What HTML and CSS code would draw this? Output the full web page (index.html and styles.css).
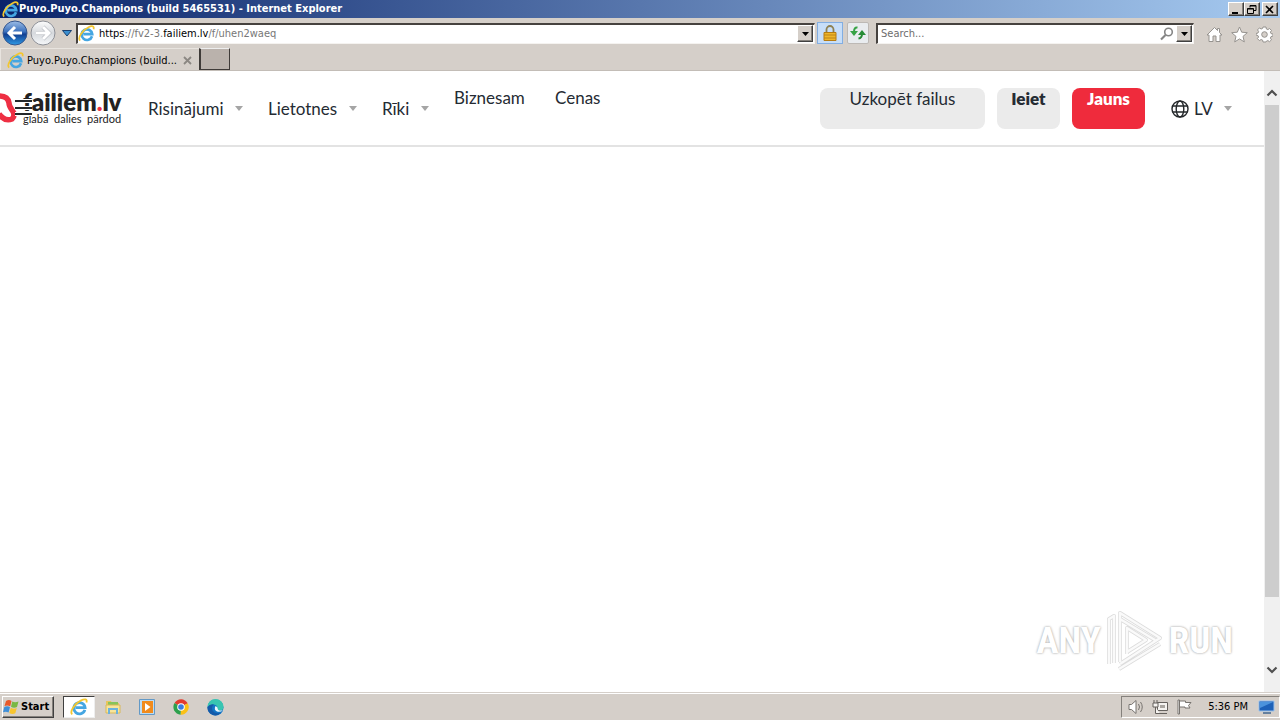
FILE: index.html
```html
<!DOCTYPE html>
<html lang="lv">
<head>
<meta charset="utf-8">
<title>Puyo.Puyo.Champions (build 5465531)</title>
<link rel="stylesheet" href="styles.css">
</head>
<body>
<svg class="defs" aria-hidden="true">
  <defs>
    <linearGradient id="blue" x1="0" y1="0" x2="0" y2="1"><stop offset="0" stop-color="#9dbde6"/><stop offset=".45" stop-color="#3a70bd"/><stop offset=".55" stop-color="#123f91"/><stop offset="1" stop-color="#2e9be6"/></linearGradient>
    <linearGradient id="pale" x1="0" y1="0" x2="0" y2="1"><stop offset="0" stop-color="#fdfdfd"/><stop offset=".5" stop-color="#d6d9dd"/><stop offset="1" stop-color="#f6f8fa"/></linearGradient>
    <symbol id="ie" viewBox="0 0 16 16">
      <path d="M13.2 10.6A5 5 0 1 1 13.4 8.600H5" fill="none" stroke="#45a6e2" stroke-width="2.500"/>
      <path d="M2 14.600C-.8 12 4.500 4.800 9.500 2.300 13.200.4 15.600.8 14.600 4" fill="none" stroke="#f3c62f" stroke-width="1.600"/>
    </symbol>
  </defs>
</svg>
<div class="titlebar">
  <svg class="i16"><use href="#ie"/></svg>
  <span class="title">Puyo.Puyo.Champions (build 5465531) - Internet Explorer</span>
  <button class="win" aria-label="Minimize"><svg width="10" height="9"><path d="M1 7h6v2H1z"/></svg></button>
  <button class="win" aria-label="Restore"><svg width="10" height="9" fill="none" stroke="#000"><path d="M3 2.500V.5h6v5H7M3 1h6M.5 3.500h6v5h-6zM.5 4h6"/></svg></button>
  <button class="win close" aria-label="Close"><svg width="10" height="9" stroke="#000" stroke-width="1.600"><path d="M1 1l7 7M8 1L1 8"/></svg></button>
</div>
<div class="toolbar">
  <button class="round" aria-label="Back"><svg width="26" height="26" viewBox="0 0 26 26"><circle cx="13" cy="13" r="12" fill="url(#blue)" stroke="#35568e"/><path d="M20 13H8M13 7l-6 6 6 6" fill="none" stroke="#fff" stroke-width="3"/></svg></button>
  <button class="round" aria-label="Forward"><svg width="26" height="26" viewBox="0 0 26 26"><circle cx="13" cy="13" r="12" fill="url(#pale)" stroke="#8d9097"/><path d="M6 13h12M13 7l6 6-6 6" fill="none" stroke="#aeb2b8" stroke-width="4"/><path d="M6 13h12M13 7l6 6-6 6" fill="none" stroke="#fff" stroke-width="3"/></svg></button>
  <button class="recent" aria-label="Recent pages"><svg width="10" height="7"><path d="M.5.500h9L5 6z" fill="#3b8fd0" stroke="#173f70"/></svg></button>
  <div class="field address">
    <svg class="i16"><use href="#ie"/></svg>
    <div class="url" role="textbox" aria-label="Address" contenteditable="true" spellcheck="false"><span class="dark">https</span>://fv2-3.<span class="dark">failiem.lv</span>/f/uhen2waeq</div>
    <button class="drop" aria-label="Show address list"><svg width="7" height="4"><path d="M0 0h7L3.500 4z"/></svg></button>
  </div>
  <button class="tool lock" aria-label="Security report"><svg width="14" height="17" viewBox="0 0 14 17"><path d="M3.500 8V4.500a3.500 3.500 0 0 1 7 0V8" fill="none" stroke="#8e8152" stroke-width="1.800"/><path d="M1 7.500h12v8H1z" fill="#eeb528" stroke="#b57b11"/><path d="M1 10h12M1 13h12" stroke="#bd8416"/></svg></button>
  <button class="tool" aria-label="Refresh"><svg width="16" height="14" viewBox="0 0 16 14"><path d="M7.500 1.500Q4 1 4 6" fill="none" stroke="#37a345" stroke-width="2"/><path d="M0 5h8l-4 5z" fill="#37a345"/><path d="M8.500 12.500Q12 12 12 8" fill="none" stroke="#278c36" stroke-width="2"/><path d="M8 9h8l-4-5z" fill="#278c36"/></svg></button>
  <div class="field search">
    <input type="text" aria-label="Search" placeholder="Search...">
    <button class="plain" aria-label="Search"><svg width="14" height="14" viewBox="0 0 14 14" fill="none" stroke="#858585"><circle cx="8.500" cy="5" r="3.800" stroke-width="1.600"/><path d="M5.500 8L1 12.500" stroke-width="2.200"/></svg></button>
    <button class="drop" aria-label="Search options"><svg width="7" height="4"><path d="M0 0h7L3.500 4z"/></svg></button>
  </div>
  <div class="tools">
    <button class="plain" aria-label="Home"><svg width="17" height="17" viewBox="0 0 17 17"><path d="M8.500 1.500L1 9h2v6.500h4V10h3v5.500h4V9h2l-2.500-2.500V2.500h-2v2z" fill="#fff" stroke="#96938f"/></svg></button>
    <button class="plain" aria-label="Favorites"><svg width="17" height="17" viewBox="0 0 17 17"><path d="M8.500 1l2.200 5.200 5.600.5-4.300 3.700 1.300 5.500-4.800-3-4.800 3L5 10.400.7 6.700l5.600-.5z" fill="#fff" stroke="#96938f"/></svg></button>
    <button class="plain" aria-label="Tools"><svg width="17" height="17" viewBox="0 0 17 17"><path d="M7 1h3l.4 2 1.500.6 1.700-1.100 1.900 2-1.100 1.600.6 1.500 2 .4v2l-2 .6-.6 1.500 1.100 1.700-2 1.900-1.600-1.100-1.500.6L10 16H7l-.4-1.900-1.500-.6-1.700 1.100-2-2 1.200-1.600L2 9.600 0 9V7.500L2 7l.6-1.500-1.100-1.600 2-2L5.100 3l1.500-.6z" fill="#fff" stroke="#96938f"/><circle cx="8.500" cy="8.500" r="2.800" fill="#d5cfc9" stroke="#96938f"/></svg></button>
  </div>
</div>
<div class="tabs">
  <div class="tab">
    <svg class="i16"><use href="#ie"/></svg>
    <span class="tabname">Puyo.Puyo.Champions (build...</span>
    <button class="plain" aria-label="Close tab"><svg width="9" height="9"><path d="M1 1l7 7M8 1L1 8" stroke="#8b8782" stroke-width="1.800"/></svg></button>
  </div>
  <button class="newtab" aria-label="New tab"></button>
</div>
<div class="viewport">
  <main class="page">
    <header class="header">
      <a class="logo" href="#">
        <svg class="ring" width="34" height="34" viewBox="0 0 34 34"><path d="M-1 5Q8 5 9 12Q9 15 12 19Q16 24 12 28Q5 31 -1 23" fill="none" stroke="#ee2f43" stroke-width="5.500"/></svg>
        <span class="brand">failiem<span class="dot">.</span>lv</span>
        <span class="slogan">glabā&nbsp; dalies&nbsp; pārdod</span>
      </a>
      <button class="burger" aria-label="Izvēlne"><svg width="17" height="18"><path d="M0 2h17M0 9h17M0 15h17" stroke="#fff" stroke-width="4"/><path d="M0 2h17M0 9h17M0 15h17" stroke="#25282b" stroke-width="2"/></svg></button>
      <nav class="nav">
        <button class="menu">Risinājumi<i class="caret"></i></button>
        <button class="menu">Lietotnes<i class="caret"></i></button>
        <button class="menu">Rīki<i class="caret"></i></button>
        <a href="#">Biznesam</a>
        <a href="#">Cenas</a>
      </nav>
      <div class="actions">
        <button class="btn upload">Uzkopēt failus</button>
        <button class="btn login">Ieiet</button>
        <button class="btn new">Jauns</button>
        <button class="menu lang"><svg width="18" height="18" viewBox="0 0 18 18" fill="none" stroke="#25282b" stroke-width="1.400"><circle cx="9" cy="9" r="8"/><ellipse cx="9" cy="9" rx="3.800" ry="8"/><path d="M1.500 6h15M1.500 12h15"/></svg>LV<i class="caret"></i></button>
      </div>
    </header>
    <div class="watermark">
      <span>ANY</span>
      <svg width="60" height="64" viewBox="0 0 60 64" fill="none" stroke-linejoin="round"><path d="M9 54V7L4 10V55M15 53V4L55 29 15 55M22 45V19L41 31 22 43M14 60L55 35M15 10L50 31" stroke="#dcdcdc" stroke-width="4"/><path d="M9 54V7L4 10V55M15 53V4L55 29 15 55M22 45V19L41 31 22 43M14 60L55 35M15 10L50 31" stroke="#fafafa" stroke-width="2.500"/></svg>
      <span>RUN</span>
    </div>
  </main>
  <div class="scroll">
    <svg width="12" height="8"><path d="M1.500 6.500L6 2l4.500 4.500" fill="none" stroke="#505050" stroke-width="2.200"/></svg>
    <div class="track"><div class="thumb"></div></div>
    <svg width="12" height="8"><path d="M1.500 1.500L6 6l4.500-4.500" fill="none" stroke="#505050" stroke-width="2.200"/></svg>
  </div>
</div>
<footer class="taskbar">
  <button class="start"><svg width="17" height="16" viewBox="0 0 17 16"><path d="M3 2q3-2 5.500 0L7.200 7.300Q4.500 5.700 1.500 7z" fill="#e8592b"/><path d="M9.300 2.500Q12 4 15.500 2.500L14 8q-3 1.500-6-.2z" fill="#79b843"/><path d="M1.300 8q3-1.500 5.700 0l-1.400 5.500Q3 12 0 13.200z" fill="#3f8fd8"/><path d="M7.800 8.800q3 1.700 6 .2l-1.500 5.300q-3 1.500-6-.3z" fill="#f7c52e"/></svg>Start</button>
  <div class="apps">
    <button class="app active" aria-label="Internet Explorer"><svg class="i18"><use href="#ie"/></svg></button>
    <button class="app" aria-label="Explorer"><svg width="16" height="16" viewBox="0 0 16 16"><path d="M1 2h5l1 2h7v10H1z" fill="#e9c65c"/><path d="M3 3h10v4H3z" fill="#86c45b"/><path d="M1 6h14v8H1z" fill="#f7e59a" stroke="#d9b95a"/><path d="M4 15v-5h8v5" fill="none" stroke="#6bb2dd" stroke-width="2"/></svg></button>
    <button class="app" aria-label="Media Player"><svg width="16" height="16" viewBox="0 0 16 16"><path d="M.5.500h15v15H.5z" fill="#bcdcf3" stroke="#6399c6"/><rect x="3" y="2" width="11" height="12" fill="#f18b1c"/><path d="M6 4l5.500 4L6 12z" fill="#fff"/></svg></button>
    <button class="app" aria-label="Chrome"><svg width="16" height="16" viewBox="0 0 16 16"><path d="M8 8L1.500 4A7.700 7.700 0 0 1 14.700 4.200z" fill="#e33b2e"/><path d="M8 8l6.700-3.800A7.700 7.700 0 0 1 7.500 15.700z" fill="#fbc116"/><path d="M8 8l-.5 7.700A7.700 7.700 0 0 1 1.500 4z" fill="#2da04c"/><circle cx="8" cy="8" r="3.800" fill="#fff"/><circle cx="8" cy="8" r="2.800" fill="#3b7de0"/></svg></button>
    <button class="app" aria-label="Edge"><svg width="17" height="17" viewBox="0 0 17 17"><circle cx="8.500" cy="8.500" r="8" fill="#1274c5"/><path d="M.5 8A8 8 0 0 1 16.500 8q0 4-5 3.500-2 0-1-2Q10.500 6 7 5.500 2.500 5 .5 8z" fill="#38c5b1"/><path d="M.5 8Q3 4.500 7 5.500q-3 2-1.500 6Q8 15.500 14 13.500 10 18 5 15.500 0 13 .5 8z" fill="#155aa8"/><path d="M8.500 7q-2 4 1.500 5.500 3 1 6-1-5 .5-5.200-1.500Q11 8 8.500 7z" fill="#eef9ff"/></svg></button>
  </div>
  <div class="tray">
    <svg width="17" height="16" viewBox="0 0 17 16" fill="#fff" stroke="#77736f"><path d="M1 5.500h2.500L8 1.500v13l-4.500-4H1z"/><path d="M10.500 5q2 3 0 6M12.500 3q3.500 5 0 10" fill="none"/></svg>
    <svg width="17" height="16" viewBox="0 0 17 16" fill="#f5f3f0" stroke="#65615d"><path d="M5.500 3.500h10v8h-10z"/><path d="M8 14.500h7M2 1v3M5 1v3M1 4h5v4H1zM3.500 8v6.500H8" /><path d="M8 6h5v3H8z" fill="#aaa6a1" stroke="none"/></svg>
    <svg width="16" height="16" viewBox="0 0 16 16" fill="#fff" stroke="#77736f"><path d="M2 1h1.500v14H2zM3.500 2h6v1.500H15l-2.500 3L14 9H9V8H3.500z"/></svg>
    <time class="clock">5:36 PM</time>
    <svg width="17" height="16" viewBox="0 0 17 16"><path d="M1 2h15v10H1z" fill="#1d61b8" stroke="#9cc3ec"/><path d="M2 3h13L2 9z" fill="#4b93dc"/><path d="M5 14h8" stroke="#65809e" stroke-width="2"/></svg>
  </div>
</footer>
</body>
</html>
```
FILE: styles.css
```css
* { box-sizing: border-box; }
body {
  margin: 0;
  height: 100vh;
  display: flex;
  flex-direction: column;
  overflow: hidden;
  background: #d5cfc9;
  font: 11px/14px "DejaVu Sans Condensed", "DejaVu Sans", sans-serif;
  color: #000;
}
button {
  margin: 0;
  padding: 0;
  border: 0;
  background: none;
  color: inherit;
  font: inherit;
}
a { color: inherit; text-decoration: none; }
svg { display: block; flex: none; }
.defs { position: absolute; width: 0; height: 0; }
.i16 { width: 17px; height: 17px; }
.i18 { width: 18px; height: 18px; }

.titlebar {
  flex: none;
  height: 18px;
  display: flex;
  align-items: center;
  padding: 0 2px;
  background: linear-gradient(90deg, #0a246a, #a6caf0);
  color: #fff;
}
.title { flex: 1; font-weight: bold; }
.win, .drop {
  display: flex;
  align-items: center;
  justify-content: center;
  background: #d5cfc9;
  border: 1px solid;
  border-color: #fff #404040 #404040 #fff;
  box-shadow: inset -1px -1px #85817c;
}
.win { width: 16px; height: 14px; }
.close { margin-left: 2px; }

.toolbar {
  flex: none;
  height: 30px;
  display: flex;
  align-items: center;
  padding: 0 7px 0 2px;
}
.round { width: 28px; }
.recent { width: 18px; display: flex; justify-content: center; }
.field {
  height: 21px;
  display: flex;
  align-items: center;
  padding-right: 1px;
  background: #fff;
  border: 1px solid;
  border-width: 2px 1px 1px 2px;
  border-color: #46423f #f5f3f0 #f5f3f0 #46423f;
}
.address { flex: 1; gap: 4px; }
.url { flex: 1; color: #777; white-space: nowrap; outline: 0; }
.dark { color: #000; }
.drop { width: 16px; height: 17px; }
.tool {
  width: 22px;
  height: 22px;
  margin-left: 4px;
  display: flex;
  align-items: center;
  justify-content: center;
  background: #e9ecef;
  border: 1px solid #bdb9b5;
  border-radius: 2px;
}
.lock { width: 26px; margin-left: 2px; background: #c7def8; border-color: #82aee2; border-radius: 0; }
.search { width: 318px; margin-left: 7px; gap: 2px; }
.search input {
  flex: 1;
  min-width: 0;
  padding: 0 3px;
  border: 0;
  background: none;
  outline: 0;
  font: inherit;
}
.search input::placeholder { color: #6d6d6d; opacity: 1; }
.tools { display: flex; gap: 8px; margin-left: 12px; padding-top: 3px; }

.tabs { flex: none; height: 23px; display: flex; align-items: center; border-bottom: 1px solid #c3bdb7; }
.tab {
  width: 199px;
  height: 22px;
  display: flex;
  align-items: center;
  gap: 3px;
  padding: 2px 7px 0 6px;
  border: 1px solid #e8e4df;
  border-width: 1px 0 0 1px;
}
.tabname { flex: 1; white-space: nowrap; }
.newtab {
  width: 31px;
  height: 22px;
  background: #bab2ac;
  border: 1px solid #3f3b38;
  border-width: 1px 1px 1px 2px;
  border-top-color: #eee;
}

.viewport { flex: 1; min-height: 0; display: flex; background: #fff; }
.page { flex: 1; position: relative; font: 17px/20px "Lato", sans-serif; color: #252b33; }
.header {
  position: relative;
  display: flex;
  padding: 17px 20px 16px 0;
  border-bottom: 2px solid #e3e3e3;
}
.logo { position: relative; width: 148px; padding: 3px 0 0 23px; color: #222; }
.ring { position: absolute; left: 0; top: 3px; }
.brand { display: block; font: 800 24px/22px "Lato", sans-serif; }
.slogan { display: block; font: 11px/11px "Lato", sans-serif; white-space: nowrap; }
.dot { color: #ee2f43; }
.burger { position: absolute; left: 15px; top: 28px; }
.nav { display: grid; grid-template-columns: 120px 114px 72px 101px auto; height: 41px; }
.menu { display: flex; align-items: center; height: 41px; }
.nav .menu { padding-right: 25px; }
.caret {
  margin-left: auto;
  border: 4px solid transparent;
  border-top: 5px solid #a5a5a5;
  border-bottom: 0;
}
.actions { display: flex; gap: 12px; margin-left: auto; }
.btn {
  height: 41px;
  padding: 0 14px 20px;
  border-radius: 8px;
  background: #ebebeb;
  white-space: nowrap;
}
.upload { min-width: 165px; }
.login { min-width: 63px; font-weight: 800; }
.new { min-width: 73px; background: #ef2b3c; color: #fff; font-weight: 800; }
.lang { width: 87px; padding: 0 12px 0 14px; gap: 5px; }

.watermark {
  position: absolute;
  right: 31px;
  bottom: 19px;
  display: flex;
  align-items: center;
  gap: 4px;
  font: bold 37px/48px "Roboto Condensed", "Liberation Sans Narrow", "Open Sans Condensed", sans-serif;
  color: #fff;
  text-shadow: 0 0 2px #aaa, 0 0 3px #ccc;
}

.scroll {
  width: 16px;
  display: flex;
  flex-direction: column;
  align-items: center;
  padding: 18px 0;
  background: #f0f0f0;
}
.track { flex: 1; width: 14px; padding: 8px 0; }
.thumb { height: 89%; background: #cdcdcd; }

.taskbar {
  flex: none;
  height: 28px;
  display: flex;
  align-items: center;
  padding: 1px 0 0 2px;
  border-top: 1px solid #d5cfc9;
  box-shadow: inset 0 1px #fff;
}
.start {
  width: 52px;
  height: 22px;
  display: flex;
  align-items: center;
  gap: 1px;
  font-weight: bold;
  border: 1px solid;
  border-color: #fff #404040 #404040 #fff;
  box-shadow: inset -1px -1px #85817c;
}
.apps { display: flex; gap: 2px; margin-left: 9px; }
.app { width: 32px; height: 22px; display: flex; align-items: center; justify-content: center; }
.active { background: #fff; border: 1px solid; border-color: #404040 #eee #eee #404040; }
.tray {
  height: 22px;
  margin-left: auto;
  display: flex;
  align-items: center;
  gap: 7px;
  padding: 0 4px 0 6px;
  border: 1px solid;
  border-color: #85817c #fff #fff #85817c;
}
.clock { margin: 0 3px 0 9px; }
```
